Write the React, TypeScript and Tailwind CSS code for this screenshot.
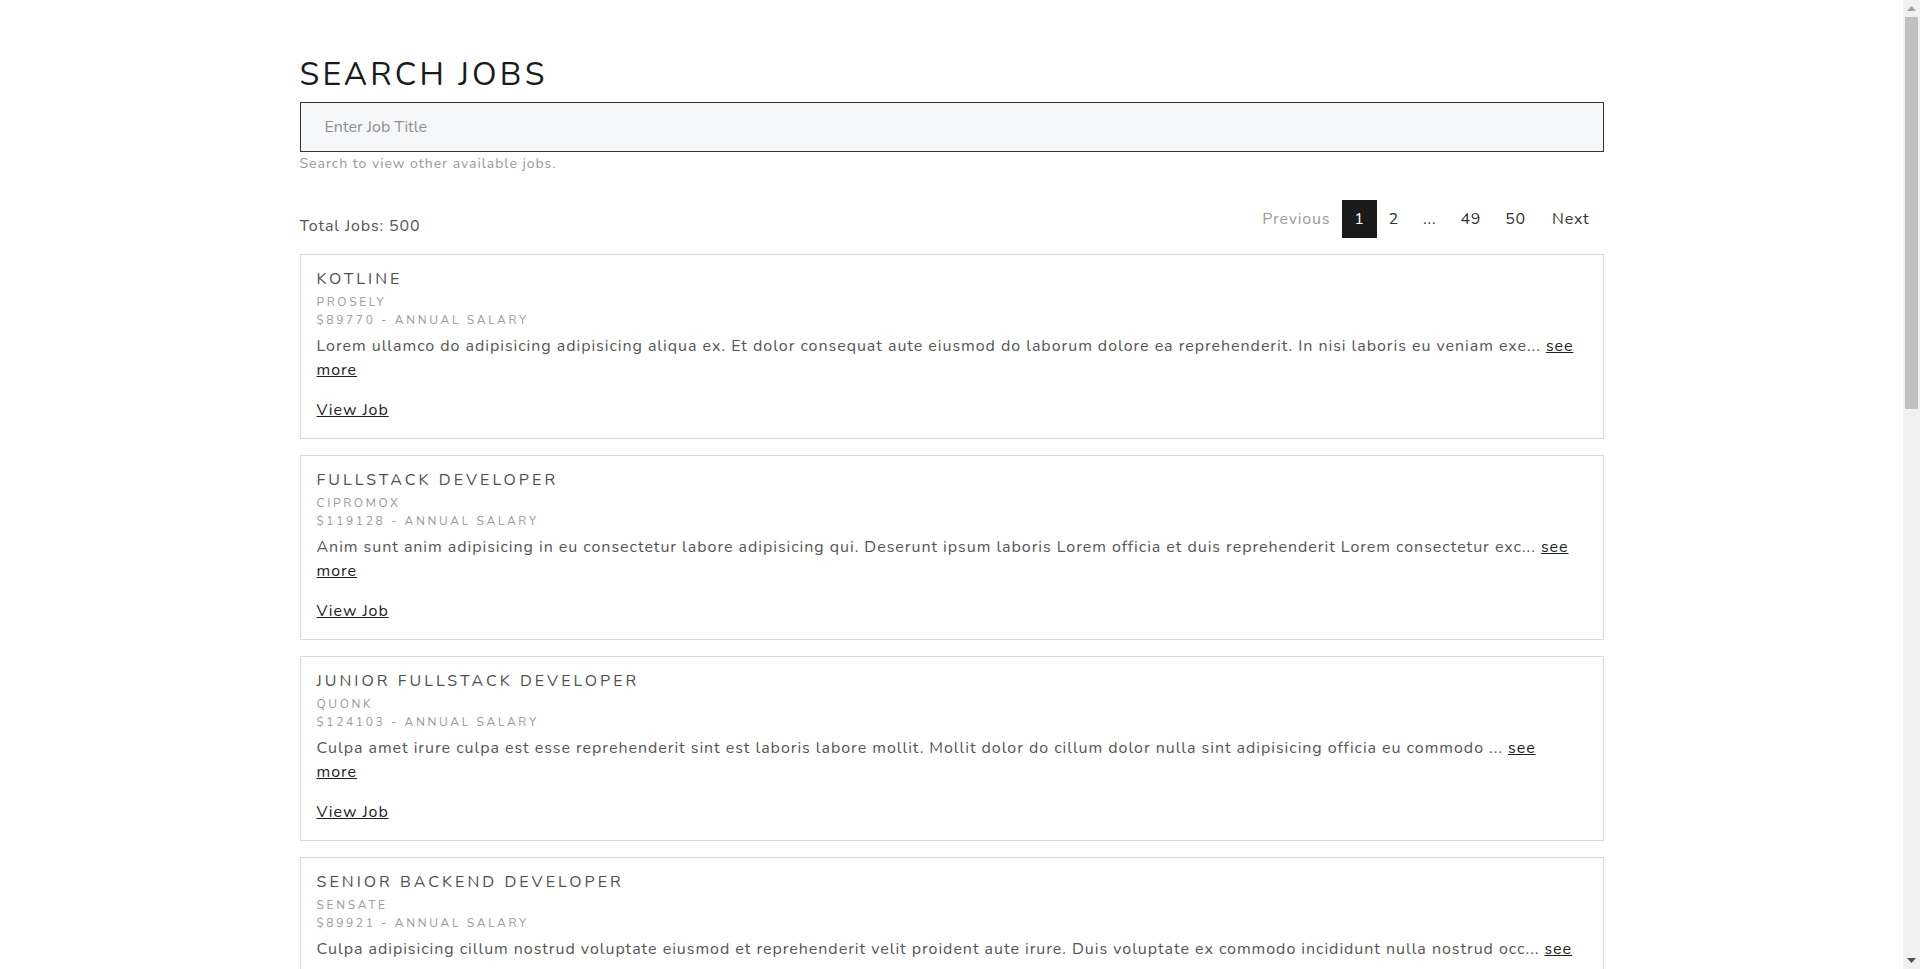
import React from "react";

type Job = {
	title: string;
	company: string;
	salary: number;
	description: string;
};

const jobs: Job[] = [
	{
		title: "Kotline",
		company: "Prosely",
		salary: 89770,
		description:
			"Lorem ullamco do adipisicing adipisicing aliqua ex. Et dolor consequat aute eiusmod do laborum dolore ea reprehenderit. In nisi laboris eu veniam exe...",
	},
	{
		title: "Fullstack Developer",
		company: "Cipromox",
		salary: 119128,
		description:
			"Anim sunt anim adipisicing in eu consectetur labore adipisicing qui. Deserunt ipsum laboris Lorem officia et duis reprehenderit Lorem consectetur exc...",
	},
	{
		title: "Junior Fullstack Developer",
		company: "Quonk",
		salary: 124103,
		description:
			"Culpa amet irure culpa est esse reprehenderit sint est laboris labore mollit. Mollit dolor do cillum dolor nulla sint adipisicing officia eu commodo ...",
	},
	{
		title: "Senior Backend Developer",
		company: "Sensate",
		salary: 89921,
		description:
			"Culpa adipisicing cillum nostrud voluptate eiusmod et reprehenderit velit proident aute irure. Duis voluptate ex commodo incididunt nulla nostrud occ...",
	},
	{
		title: "Frontend Developer",
		company: "Zillacon",
		salary: 101450,
		description:
			"Ex nostrud sint laborum veniam est consequat esse ad. Fugiat ullamco anim magna minim irure aliquip et cillum sunt deserunt aliquip dolore commodo e...",
	},
	{
		title: "DevOps Engineer",
		company: "Geekology",
		salary: 112034,
		description:
			"Officia dolor veniam ipsum esse irure cupidatat minim. Nostrud elit aute sit pariatur excepteur eiusmod tempor ut laborum ullamco quis exercitation ...",
	},
];

const pages = ["1", "2", "...", "49", "50"];

const JobCard: React.FC<{ job: Job }> = ({ job }) => {
	return (
		<div className="border border-[#d9d9d9] px-4 pt-3 pb-4">
			<h2 className="text-base leading-6 uppercase tracking-[0.19em] text-[#4f4f4f]">
				{job.title}
			</h2>
			<p className="mt-[2px] text-[12px] leading-[18px] uppercase tracking-[0.22em] text-[#9a9a9a]">
				{job.company}
			</p>
			<p className="text-[12px] leading-[18px] uppercase tracking-[0.22em] text-[#9a9a9a]">
				${job.salary} - Annual Salary
			</p>
			<p className="mt-[5px] pr-2 text-base leading-6 tracking-[0.06em] text-[#555]">
				{job.description}{" "}
				<a href="#" className="text-[#222] underline">
					see more
				</a>
			</p>
			<a
				href="#"
				className="mt-4 inline-block text-base leading-6 tracking-[0.06em] text-[#222] underline"
			>
				View Job
			</a>
		</div>
	);
};

// the browser's own scrollbar, as it shows in the screenshot
const FakeScrollbar = () => (
	<div className="fixed top-0 right-0 flex h-screen w-[17px] flex-col bg-[#f1f1f1]">
		<div className="flex h-[17px] items-center justify-center">
			<svg width="9" height="5" viewBox="0 0 9 5">
				<path d="M0 5 L4.5 0 L9 5 Z" fill="#a3a3a3" />
			</svg>
		</div>
		<div className="mx-[2px] h-[392px] bg-[#c1c1c1]" />
		<div className="flex-1" />
		<div className="flex h-[17px] items-center justify-center">
			<svg width="9" height="5" viewBox="0 0 9 5">
				<path d="M0 0 L9 0 L4.5 5 Z" fill="#505050" />
			</svg>
		</div>
	</div>
);

export default function App() {
	return (
		<div className="min-h-screen bg-white pr-[17px] font-['Nunito','Lato',sans-serif]">
			<div className="mx-auto w-[1304px] pt-[55px] pb-10">
				<h1 className="text-[32px] leading-[40px] uppercase tracking-[0.1em] text-[#1a1a1a]">
					Search Jobs
				</h1>
				<input
					type="text"
					placeholder="Enter Job Title"
					className="mt-[7px] block h-[50px] w-full border border-[#333] bg-[#f6f7f9] px-6 text-base text-[#333] outline-none placeholder:text-[#8f8f8f]"
				/>
				<p className="mt-[2px] text-sm leading-5 tracking-[0.07em] text-[#999]">
					Search to view other available jobs.
				</p>

				<div className="mt-[26px] mb-4 flex items-end justify-between">
					<p className="text-base leading-6 tracking-[0.055em] text-[#555]">
						Total Jobs: 500
					</p>
					<div className="flex items-center text-base tracking-[0.05em]">
						<button className="h-[38px] px-3 text-[#999]">Previous</button>
						{pages.map((p) => (
							<button
								key={p}
								className={
									p === "1"
										? "h-[38px] px-3 bg-[#1a1a1a] text-white"
										: "h-[38px] px-3 text-[#333]"
								}
							>
								{p}
							</button>
						))}
						<button className="h-[38px] px-3.5 text-[#333]">Next</button>
					</div>
				</div>

				<div className="flex flex-col gap-4">
					{jobs.map((job) => (
						<JobCard key={job.title} job={job} />
					))}
				</div>
			</div>
			<FakeScrollbar />
		</div>
	);
}
